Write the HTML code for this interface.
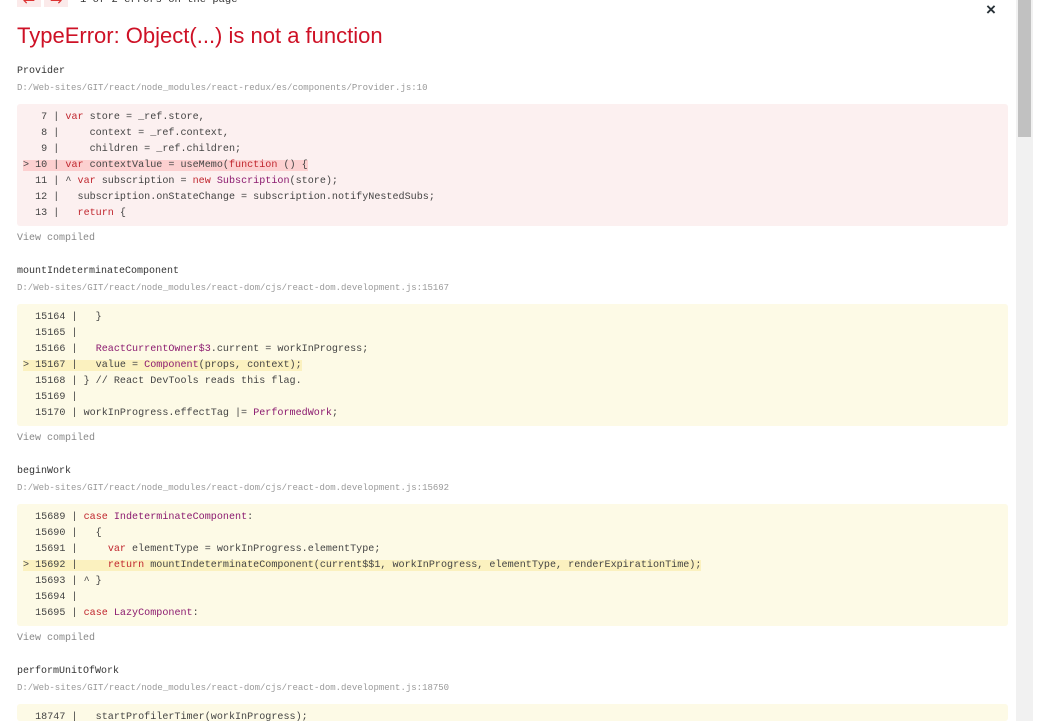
<!DOCTYPE html>
<html><head><meta charset="utf-8"><style>
html,body{margin:0;padding:0;background:#fff;width:1053px;height:721px;overflow:hidden;position:relative}
.mono{font-family:"Liberation Mono",monospace}
.abs{position:absolute}
.name{left:17px;font-size:10px;color:#333;font-family:"Liberation Mono",monospace;line-height:12px}
.path{left:17px;font-size:9px;color:#999;font-family:"Liberation Mono",monospace;line-height:12px}
.vc{left:17px;font-size:10px;color:#888;font-family:"Liberation Mono",monospace;line-height:12px}
.blk{left:17px;width:991px;height:122px;border-radius:3px;overflow:hidden}
.pink{background:#fcf0f0}
.yel{background:#fdfae6}
pre{margin:0;padding:6px 0 0 6px;font-family:"Liberation Mono",monospace;font-size:10.1px;line-height:16px;color:#444}
.hp{background:#fcd0d0}
.hy{background:#fbf1bf}
.k{color:#c0262e}
.p{color:#8b1a6f}
</style></head><body>
<div class="abs" style="left:17px;top:-6px;width:24px;height:13px;background:#fbeaea;color:#d33;font-size:15px;line-height:12px;text-align:center;font-family:'DejaVu Sans',sans-serif">←</div>
<div class="abs" style="left:44px;top:-6px;width:24px;height:13px;background:#fbeaea;color:#d33;font-size:15px;line-height:12px;text-align:center;font-family:'DejaVu Sans',sans-serif">→</div>
<div class="abs mono" style="left:80px;top:-6px;font-size:10.5px;color:#333;line-height:12px">1 of 2 errors on the page</div>
<div class="abs" style="left:986px;top:0px;font-family:'Liberation Sans',sans-serif;font-size:17px;font-weight:bold;color:#293238">×</div>
<div class="abs" style="left:1016px;top:0;width:17px;height:721px;background:#f1f1f1"></div>
<div class="abs" style="left:1018px;top:0;width:13px;height:137px;background:#c1c1c1"></div>
<div class="abs" style="left:17px;top:23px;font-family:'Liberation Sans',sans-serif;font-size:22px;color:#ce1126;line-height:26px">TypeError: Object(...) is not a function</div>

<div class="abs name" style="top:66px">Provider</div>
<div class="abs path" style="top:82px">D:/Web-sites/GIT/react/node_modules/react-redux/es/components/Provider.js:10</div>
<div class="abs blk pink" style="top:104px"><pre>   7 | <span class="k">var</span> store = _ref.store,
   8 |     context = _ref.context,
   9 |     children = _ref.children;
<span class="hp">&gt; 10 | <span class="k">var</span> contextValue = useMemo(<span class="k">function</span> () {</span>
  11 | ^ <span class="k">var</span> subscription = <span class="k">new</span> <span class="p">Subscription</span>(store);
  12 |   subscription.onStateChange = subscription.notifyNestedSubs;
  13 |   <span class="k">return</span> {</pre></div>
<div class="abs vc" style="top:233px">View compiled</div>

<div class="abs name" style="top:266px">mountIndeterminateComponent</div>
<div class="abs path" style="top:282px">D:/Web-sites/GIT/react/node_modules/react-dom/cjs/react-dom.development.js:15167</div>
<div class="abs blk yel" style="top:304px"><pre>  15164 |   }
  15165 |
  15166 |   <span class="p">ReactCurrentOwner$3</span>.current = workInProgress;
<span class="hy">&gt; 15167 |   value = <span class="p">Component</span>(props, context);</span>
  15168 | } // React DevTools reads this flag.
  15169 |
  15170 | workInProgress.effectTag |= <span class="p">PerformedWork</span>;</pre></div>
<div class="abs vc" style="top:433px">View compiled</div>

<div class="abs name" style="top:466px">beginWork</div>
<div class="abs path" style="top:482px">D:/Web-sites/GIT/react/node_modules/react-dom/cjs/react-dom.development.js:15692</div>
<div class="abs blk yel" style="top:504px"><pre>  15689 | <span class="k">case</span> <span class="p">IndeterminateComponent</span>:
  15690 |   {
  15691 |     <span class="k">var</span> elementType = workInProgress.elementType;
<span class="hy">&gt; 15692 |     <span class="k">return</span> mountIndeterminateComponent(current$$1, workInProgress, elementType, renderExpirationTime);</span>
  15693 | ^ }
  15694 |
  15695 | <span class="k">case</span> <span class="p">LazyComponent</span>:</pre></div>
<div class="abs vc" style="top:633px">View compiled</div>

<div class="abs name" style="top:666px">performUnitOfWork</div>
<div class="abs path" style="top:682px">D:/Web-sites/GIT/react/node_modules/react-dom/cjs/react-dom.development.js:18750</div>
<div class="abs blk yel" style="top:704px;height:17px"><pre>  18747 |   startProfilerTimer(workInProgress);</pre></div>
</body></html>
